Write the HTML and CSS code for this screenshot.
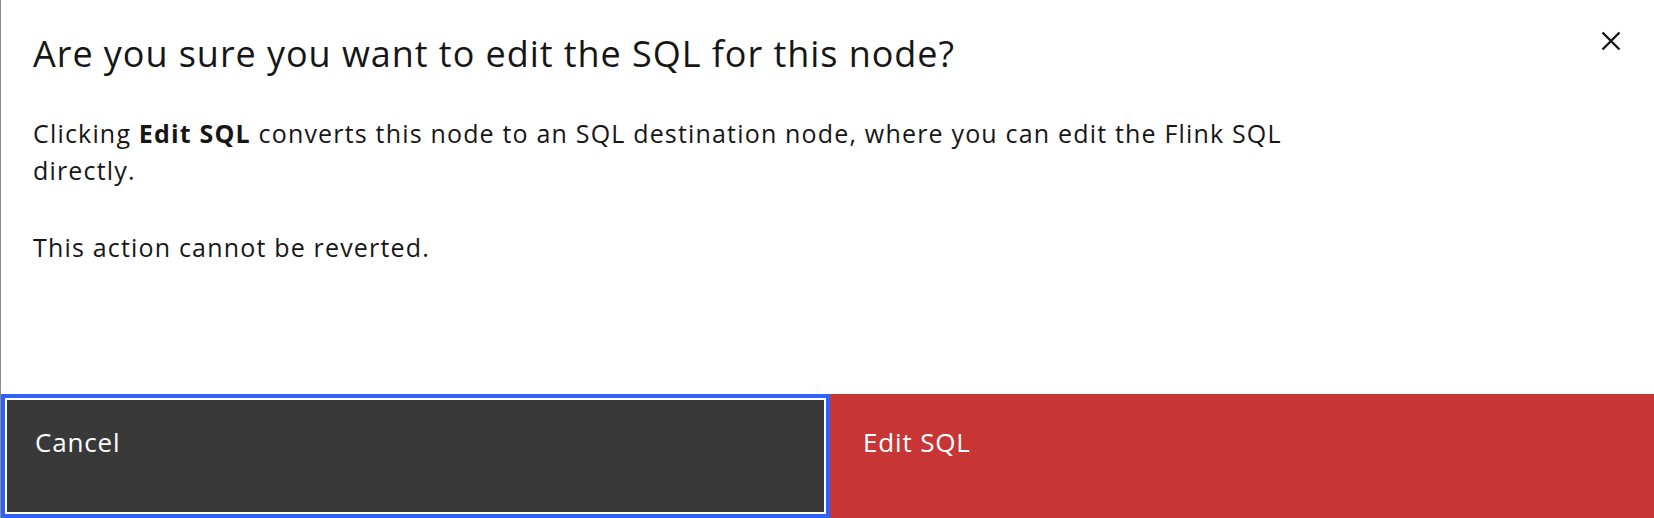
FILE: index.html
```html
<!DOCTYPE html>
<html lang="en">
<head>
<meta charset="utf-8">
<title>Edit SQL</title>
<link rel="stylesheet" href="styles.css">
</head>
<body>
<div class="modal" role="dialog" aria-labelledby="modal-title">
  <header class="modal-header">
    <h2 class="modal-title" id="modal-title">Are you sure you want to edit the SQL for this node?</h2>
    <button class="modal-close" type="button" aria-label="Close">
      <svg width="20" height="20" viewBox="0 0 20 20" aria-hidden="true">
        <path d="M1.5 1.5 L18.5 18.5 M18.5 1.5 L1.5 18.5" stroke="#161616" stroke-width="2.4" fill="none"/>
      </svg>
    </button>
  </header>
  <div class="modal-content">
    <p>Clicking <strong>Edit SQL</strong> converts this node to an SQL destination node, where you can edit the Flink SQL directly.</p>
    <p>This action cannot be reverted.</p>
  </div>
  <footer class="modal-footer">
    <button class="btn btn-secondary" type="button">Cancel</button>
    <button class="btn btn-danger" type="button">Edit SQL</button>
  </footer>
</div>
</body>
</html>
```
FILE: styles.css
```css
html, body {
  margin: 0;
  padding: 0;
  background: #ffffff;
}

body {
  font-family: "Open Sans", "Noto Sans", "Liberation Sans", Arial, sans-serif;
  color: #161616;
}

.modal {
  box-sizing: border-box;
  height: 518px;
  border-left: 1px solid #8d8d8d;
  display: flex;
  flex-direction: column;
  background: #ffffff;
}

.modal-header {
  display: flex;
  justify-content: space-between;
  align-items: flex-start;
  padding: 31px 33px 0 32px;
}

.modal-title {
  margin: 1px 0 0 0;
  font-size: 36px;
  line-height: 44px;
  font-weight: 400;
  letter-spacing: 0.95px;
  color: #161616;
}

.modal-close {
  border: 0;
  padding: 0;
  margin: 0;
  background: transparent;
  width: 20px;
  height: 20px;
  display: flex;
}

.modal-content {
  padding: 39px 0 0 32px;
  width: 1300px;
  font-size: 25px;
  line-height: 37px;
  letter-spacing: 1.18px;
}

.modal-content p {
  margin: 0 0 40px 0;
}

.modal-content strong {
  font-weight: 700;
}

.modal-footer {
  margin-top: auto;
  display: grid;
  grid-template-columns: 829px 1fr;
  height: 124px;
}

.btn {
  box-sizing: border-box;
  border: 0;
  margin: 0;
  text-align: left;
  font-family: "Open Sans", "Noto Sans", "Liberation Sans", Arial, sans-serif;
  font-size: 26px;
  line-height: 36px;
  letter-spacing: 0.85px;
  color: #ffffff;
  padding: 30px 33px 0 33px;
  display: flex;
  align-items: flex-start;
}

.btn-secondary {
  background: #393939;
  border: 4px solid #2f62f5;
  box-shadow: inset 0 0 0 2px #ffffff;
  padding: 26px 30px 0 30px;
}

.btn-danger {
  background: #c73534;
}
```
